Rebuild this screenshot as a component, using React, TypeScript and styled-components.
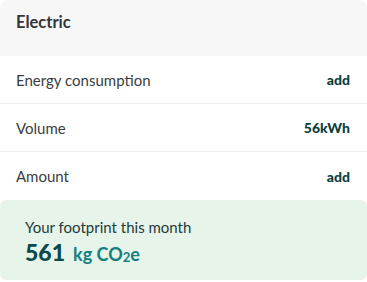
import React from 'react';
import { createGlobalStyle, styled } from 'styled-components';

const GlobalStyle = createGlobalStyle`
  html, body {
    margin: 0;
    padding: 0;
    background: #ffffff;
    font-family: Lato, 'Noto Sans', sans-serif;
  }
`;

const rows = [
  { label: 'Energy consumption', value: 'add' },
  { label: 'Volume', value: '56kWh' },
  { label: 'Amount', value: 'add' },
];

const App: React.FC = () => {
  return (
    <>
      <GlobalStyle />
      <Card>
        <Header>
          <Title>Electric</Title>
        </Header>
        <List>
          {rows.map((row, i) => (
            <Row key={row.label} $last={i === rows.length - 1}>
              <Label>{row.label}</Label>
              <Value>{row.value}</Value>
            </Row>
          ))}
        </List>
        <Footprint>
          <FootprintLabel>Your footprint this month</FootprintLabel>
          <FootprintValue>
            <Amount>561</Amount>
            <Unit>
              kg CO<sub>2</sub>e
            </Unit>
          </FootprintValue>
        </Footprint>
      </Card>
    </>
  );
};

export default App;

const Card = styled.div`
  width: 367px;
  display: flex;
  flex-direction: column;
`;

const Header = styled.div`
  height: 56px;
  box-sizing: border-box;
  padding: 12px 16px 0;
  background: #f7f7f7;
  border-radius: 8px 8px 0 0;
`;

const Title = styled.h2`
  margin: 0;
  font-size: 16.5px;
  line-height: 20px;
  font-weight: 700;
  color: #333538;
`;

const List = styled.div`
  display: flex;
  flex-direction: column;
`;

const Row = styled.div<{ $last?: boolean }>`
  height: 48px;
  box-sizing: border-box;
  padding: 0 17px 0 16px;
  display: flex;
  align-items: center;
  justify-content: space-between;
  border-bottom: ${({ $last }) => ($last ? 'none' : '1px solid #ececec')};
`;

const Label = styled.span`
  font-size: 15px;
  color: #3a3d40;
`;

const Value = styled.span`
  font-size: 14px;
  font-weight: 900;
  color: #0d3f40;
`;

const Footprint = styled.div`
  height: 80px;
  box-sizing: border-box;
  padding: 17px 24px 0 25px;
  background: #e6f4e9;
  border-radius: 6px;
`;

const FootprintLabel = styled.div`
  font-size: 15px;
  line-height: 20px;
  color: #1e3b3d;
`;

const FootprintValue = styled.div`
  display: flex;
  align-items: baseline;
  gap: 8px;
  margin-top: 1px;
`;

const Amount = styled.span`
  font-size: 23px;
  line-height: 28px;
  font-weight: 900;
  color: #0d4a4c;
`;

const Unit = styled.span`
  font-size: 18px;
  font-weight: 700;
  color: #13807f;

  sub {
    font-size: 13px;
    vertical-align: baseline;
    position: relative;
    top: 1px;
  }
`;
